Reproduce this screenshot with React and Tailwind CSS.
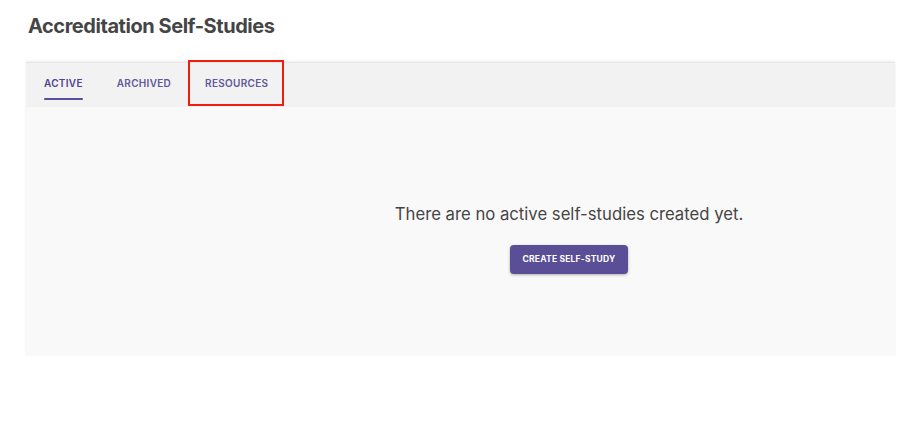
import React from 'react';

const tabs = ['Active', 'Archived', 'Resources'];

const App = () => {
  return (
    <div className="min-h-[426px] bg-white font-['Inter',sans-serif] text-[#454545]">
      <div className="pl-[28px] pt-[12px]">
        <h1 className="text-[20px] leading-[28px] font-bold tracking-[-0.45px]">Accreditation Self-Studies</h1>
      </div>

      <div className="ml-[26px] mr-[12px] mt-[22px] shadow-[0_-1px_2px_rgba(0,0,0,0.08)]">
        {/* Tabs */}
        <div className="h-[45px] bg-[#f2f2f2] flex items-stretch pl-[18px] border-t border-[#e6e6e6]">
          {tabs.map((tab, i) => (
            <div
              key={tab}
              className={`relative flex items-center pb-[4px] mr-[34px] text-[10px] font-semibold uppercase tracking-[0.3px] ${
                i === 0 ? 'text-[#4f438f]' : 'text-[#5f5899]'
              }`}
            >
              {tab}
              {i === 0 && (
                <span className="absolute left-0 right-0 bottom-[7px] h-[2px] bg-[#5a4e9c] rounded-sm" />
              )}
              {i === 2 && (
                <span className="absolute -left-[17px] -right-[16px] -top-[3px] bottom-[1px] border-2 border-[#f21b0c]" />
              )}
            </div>
          ))}
        </div>

        {/* Empty state */}
        <div className="h-[249px] bg-[#f9f9f9] flex flex-col items-center pl-[217px] pt-[97px]">
          <p className="text-[16.7px] leading-[20px] text-[#454545]">There are no active self-studies created yet.</p>
          <button className="mt-[21px] h-[29px] px-[13px] rounded-[4px] bg-[#5a4e96] text-white text-[8.5px] font-bold uppercase tracking-[0.2px] shadow-[0_1px_3px_rgba(0,0,0,0.3)]">
            Create Self-Study
          </button>
        </div>
      </div>
    </div>
  );
};

export default App;
